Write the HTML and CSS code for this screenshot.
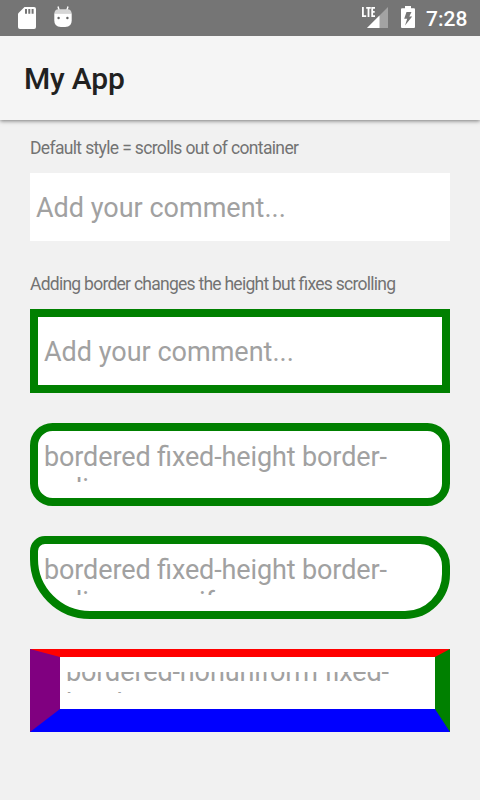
FILE: index.html
```html
<!DOCTYPE html>
<html lang="en">
<head>
<meta charset="utf-8">
<title>My App</title>
<link rel="stylesheet" href="styles.css">
</head>
<body>
<div class="status">
  <svg class="sd" width="18" height="22" viewBox="0 0 18 22"><path fill="#fff" d="M6.500 0H16a2 2 0 0 1 2 2v18a2 2 0 0 1-2 2H2a2 2 0 0 1-2-2V6.500z"/><path fill="#757575" d="M7 2h2v4.700H7zM10.300 2h2v4.700h-2zM13.600 2h2v4.700h-2z"/></svg>
  <svg class="droid" width="18" height="22" viewBox="0 0 18 22"><path d="M4 .5l1.200 4M14 .5l-1.200 4" stroke="#fff" stroke-width="1.400" fill="none"/><path fill="#fff" d="M.3 7.200h17.400v7.300q0 6.500-6.500 6.500H6.800Q.3 21 .3 14.500z"/><path fill="#d6d6d6" d="M.3 7.200Q1 3.300 4.200 3.300h9.600q3.200 0 3.900 3.900z"/><circle cx="4.600" cy="12" r="1.200" fill="#666"/><circle cx="13.400" cy="12" r="1.200" fill="#666"/></svg>
  <svg class="signal" width="27" height="22" viewBox="0 0 27 22"><path fill="#a3a3a3" d="M26 0v21H5z"/><path fill="#fff" d="M17.500 8.500V21H5z"/><path fill="none" stroke="#757575" stroke-width="1" d="M14 0v10"/><g fill="none" stroke="#fff" stroke-width="1.800"><path d="M.9 0v9.100h3.300M4.200.9h4.600M6.500.9V10M13 .9H10.200v8.200H13M10 4.900h2.700"/></g></svg>
  <svg class="battery" width="14" height="22" viewBox="0 0 14 22"><path fill="#fff" d="M4 0h6v2.300h3q1 0 1 1V21q0 1-1 1H1q-1 0-1-1V3.300q0-1 1-1h3z"/><path fill="#757575" d="M10.500 6H5.500L3.200 12.800h3L4 19.500 11.200 10.600H8.300z"/></svg>
  <span class="clock">7:28</span>
</div>
<header class="bar">My App</header>
<main>
  <p class="label first">Default style = scrolls out of container</p>
  <div class="field plain"><div class="text">Add your comment...</div></div>
  <p class="label second">Adding border changes the height but fixes scrolling</p>
  <div class="field bordered"><div class="text">Add your comment...</div></div>
  <div class="field bordered rounded"><div class="text">bordered fixed-height border-<br>radius</div></div>
  <div class="field bordered uneven"><div class="text">bordered fixed-height border-<br>radius-nonuniform</div></div>
  <div class="field mixed"><div class="text"><div class="scrolled">bordered-nonuniform fixed-<br>height</div></div></div>
</main>
</body>
</html>
```
FILE: styles.css
```css
* { box-sizing: border-box; }
body { margin: 0; width: 480px; height: 800px; overflow: hidden; background: #f1f1f1; font-family: Roboto, sans-serif; font-feature-settings: "liga" 1; }
.status { position: relative; z-index: 1; height: 36px; background: #757575; display: flex; align-items: flex-start; }
.status svg { flex: none; display: block; }
.sd { margin: 7px 0 0 18px; }
.droid { margin: 6px 0 0 18px; }
.signal { margin: 7px 0 0 290px; }
.battery { margin: 6px 0 0 12px; }
.clock { color: #fff; font-size: 21px; font-weight: 500; line-height: 36px; margin: 1px 0 0 11px; }
.bar { height: 84px; padding: 1px 24px 0; background: #f5f5f5; color: #212121; font-size: 30px; font-weight: 500; line-height: 84px; letter-spacing: -.2px; box-shadow: 0 1px 4px rgba(0,0,0,.5); }
main { padding: 0 30px; }
.label { margin: 0; color: #737373; font-size: 17.5px; line-height: 22px; white-space: nowrap; }
.first { padding-top: 17px; height: 53px; letter-spacing: -.65px; }
.second { padding-top: 32px; height: 68px; letter-spacing: -.74px; }
.field { background: #fff; color: #a1a1a1; font-size: 27px; line-height: 31.5px; white-space: nowrap; overflow: hidden; }
.text { overflow: hidden; }
.plain { height: 68px; padding: 20px 6px 0; }
.bordered { height: 84px; padding: 20px 6px 0; border: 8px solid #008000; }
.rounded, .uneven { height: 83px; padding-top: 10px; margin-top: 30px; letter-spacing: -.12px; line-height: 32px; }
.rounded .text, .uneven .text { height: 41px; }
.rounded { border-radius: 22.5px; }
.uneven { border-radius: 15px 30px 45px 60px; }
.mixed { height: 83px; margin-top: 30px; padding: 15px 6px; border-style: solid; border-width: 8px 15px 23px 30px; border-color: #f00 #008000 #00f #800080; letter-spacing: -.12px; }
.mixed .text { height: 21px; }
.scrolled { margin-top: -15px; }
```
